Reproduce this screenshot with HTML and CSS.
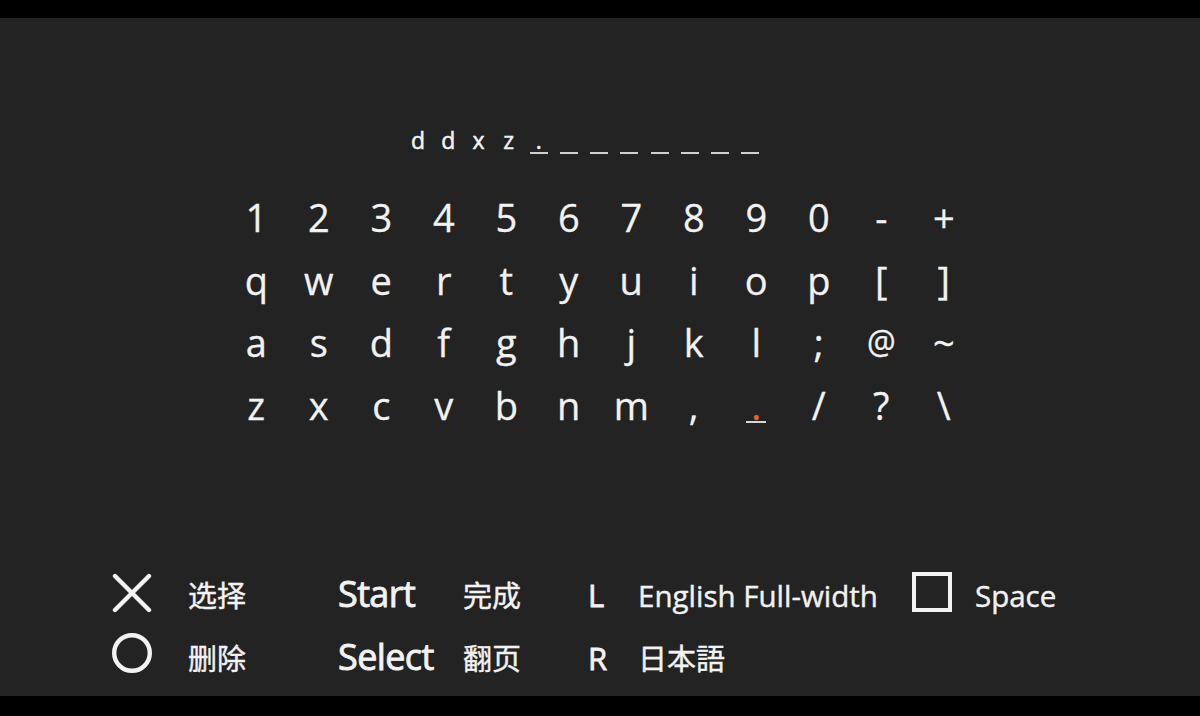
FILE: index.html
```html
<!DOCTYPE html>
<html lang="zh-CN">
<head>
<meta charset="utf-8">
<title>Keyboard</title>
<link rel="stylesheet" href="styles.css">
</head>
<body>
<div class="screen">
  <div class="entry">
    <span class="slot"><span class="ch">d</span></span>
    <span class="slot"><span class="ch">d</span></span>
    <span class="slot"><span class="ch">x</span></span>
    <span class="slot"><span class="ch">z</span></span>
    <span class="slot"><span class="ch">.</span><span class="bar"></span></span>
    <span class="slot"><span class="ch"></span><span class="bar"></span></span>
    <span class="slot"><span class="ch"></span><span class="bar"></span></span>
    <span class="slot"><span class="ch"></span><span class="bar"></span></span>
    <span class="slot"><span class="ch"></span><span class="bar"></span></span>
    <span class="slot"><span class="ch"></span><span class="bar"></span></span>
    <span class="slot"><span class="ch"></span><span class="bar"></span></span>
    <span class="slot"><span class="ch"></span><span class="bar"></span></span>
  </div>

  <div class="keys">
    <div class="key">1</div><div class="key">2</div><div class="key">3</div><div class="key">4</div>
    <div class="key">5</div><div class="key">6</div><div class="key">7</div><div class="key">8</div>
    <div class="key">9</div><div class="key">0</div><div class="key">-</div><div class="key">+</div>

    <div class="key">q</div><div class="key">w</div><div class="key">e</div><div class="key">r</div>
    <div class="key">t</div><div class="key">y</div><div class="key">u</div><div class="key">i</div>
    <div class="key">o</div><div class="key">p</div><div class="key">[</div><div class="key">]</div>

    <div class="key">a</div><div class="key">s</div><div class="key">d</div><div class="key">f</div>
    <div class="key">g</div><div class="key">h</div><div class="key">j</div><div class="key">k</div>
    <div class="key">l</div><div class="key">;</div><div class="key at">@</div><div class="key">~</div>

    <div class="key">z</div><div class="key">x</div><div class="key">c</div><div class="key">v</div>
    <div class="key">b</div><div class="key">n</div><div class="key">m</div><div class="key">,</div>
    <div class="key cur">.</div><div class="key">/</div><div class="key">?</div><div class="key">\</div>
  </div>

  <div class="legend">
    <div class="icon icon-x">
      <svg width="40" height="40" viewBox="0 0 40 40"><path d="M3 3 L37 37 M37 3 L3 37" stroke="#f2f2f2" stroke-width="4.4" stroke-linecap="round" fill="none"/></svg>
    </div>
    <div class="cjk">选择</div>
    <div class="btn">Start</div>
    <div class="cjk">完成</div>
    <div class="trig">L</div>
    <div class="lbl">English Full-width</div>
    <div class="icon icon-sq">
      <svg width="40" height="40" viewBox="0 0 40 40"><rect x="2" y="2" width="36" height="36" stroke="#f2f2f2" stroke-width="4" fill="none"/></svg>
    </div>
    <div class="lbl">Space</div>

    <div class="icon icon-o">
      <svg width="40" height="40" viewBox="0 0 40 40"><circle cx="20" cy="20" r="17.8" stroke="#f2f2f2" stroke-width="4.4" fill="none"/></svg>
    </div>
    <div class="cjk">删除</div>
    <div class="btn">Select</div>
    <div class="cjk">翻页</div>
    <div class="trig">R</div>
    <div class="cjk jp" lang="ja">日本語</div>
  </div>
</div>
</body>
</html>
```

FILE: styles.css
```css
html, body {
  margin: 0;
  padding: 0;
}

body {
  background: #000;
  width: 1200px;
  height: 716px;
  overflow: hidden;
}

.screen {
  margin-top: 18px;
  height: 678px;
  background: #232323;
  color: #f2f2f2;
  font-family: "Open Sans", "Noto Sans CJK SC", sans-serif;
  display: flex;
  flex-direction: column;
}

/* text entry line */
.entry {
  display: flex;
  margin-top: 110px;
  padding-left: 403px;
  height: 26px;
}

.slot {
  width: 30.2px;
  display: flex;
  flex-direction: column;
  align-items: center;
}

.ch {
  font-size: 23px;
  line-height: 24px;
  height: 24px;
  -webkit-text-stroke: 0.5px #f2f2f2;
}

.bar {
  width: 18px;
  height: 2px;
  background: #cfcfcf;
}

/* keyboard */
.keys {
  margin-top: 32px;
  display: grid;
  grid-template-columns: repeat(12, 62.5px);
  grid-auto-rows: 62.67px;
  justify-content: center;
  font-size: 38px;
  line-height: 62.67px;
  text-align: center;
  -webkit-text-stroke: 0.3px #f2f2f2;
}

.key {
  position: relative;
}

.key.at {
  font-size: 32px;
}

.key.cur {
  color: #e4691f;
  -webkit-text-stroke: 0.3px #e4691f;
}

.key.cur::after {
  content: "";
  position: absolute;
  left: 50%;
  top: 47px;
  width: 20px;
  height: 2px;
  margin-left: -10px;
  background: #d6d6d6;
}

/* button legend */
.legend {
  margin-top: 132px;
  display: grid;
  grid-template-columns: 76px 150px 125px 125px 50px 274px 63px auto;
  grid-template-rows: 63px 63px;
  padding-left: 112px;
  align-items: baseline;
}

.icon {
  align-self: start;
  width: 40px;
  height: 40px;
}

.icon svg {
  display: block;
}

.icon-x { margin-top: 4.5px; }
.icon-sq { margin-top: 3.5px; }
.icon-o { margin-top: 1.5px; }

.cjk {
  font-family: "Noto Sans CJK SC", sans-serif;
  font-size: 29px;
  font-weight: 400;
  -webkit-text-stroke: 0.4px #f2f2f2;
}

.cjk.jp {
  font-family: "Noto Sans CJK JP", sans-serif;
}

.btn {
  font-size: 36px;
  letter-spacing: -0.6px;
  -webkit-text-stroke: 0.9px #f2f2f2;
}

.trig {
  font-size: 31px;
  -webkit-text-stroke: 0.8px #f2f2f2;
}

.lbl {
  font-size: 29.5px;
  -webkit-text-stroke: 0.4px #f2f2f2;
}
```
